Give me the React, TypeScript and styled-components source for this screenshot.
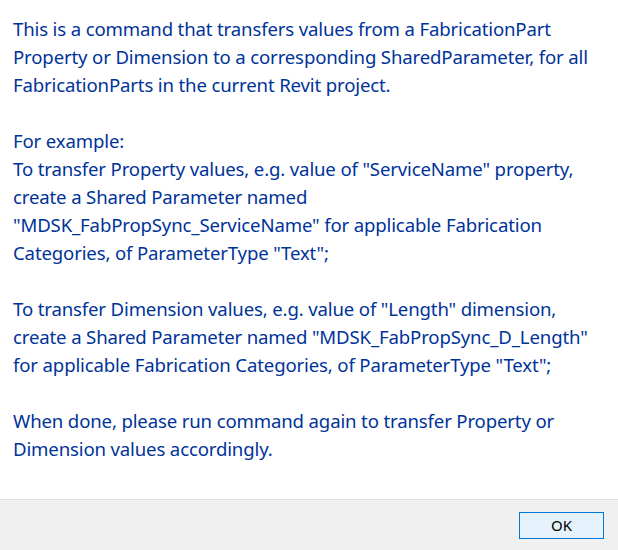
import React from "react";
import styled, { createGlobalStyle } from "styled-components";

const GlobalStyle = createGlobalStyle`
  html, body {
    margin: 0;
    padding: 0;
    background: #fff;
  }
  #root {
    height: 550px;
  }
`;

const Dialog = styled.div`
  display: flex;
  flex-direction: column;
  width: 618px;
  height: 550px;
  background: #fff;
  font-family: "Noto Sans", "Open Sans", sans-serif;
`;

const Content = styled.div`
  flex: 1;
  padding: 15px 13px 0 13px;
  display: flex;
  flex-direction: column;
  gap: 28px;
`;

const Paragraph = styled.p`
  margin: 0;
  color: #003399;
  font-size: 18.6px;
  letter-spacing: -0.15px;
  line-height: 28px;
  white-space: nowrap;
`;

const Footer = styled.div`
  height: 50px;
  border-top: 1px solid #dfdfdf;
  background: #f0f0f0;
  display: flex;
  align-items: center;
  justify-content: flex-end;
  padding-right: 14px;
`;

const Button = styled.button`
  width: 85px;
  height: 27px;
  box-sizing: border-box;
  border: 1px solid #0078d7;
  background: #e5f1fb;
  color: #000;
  font-family: "Noto Sans", "Open Sans", sans-serif;
  font-size: 15px;
  padding: 0;
  cursor: pointer;
`;

const paragraphs: string[][] = [
  [
    "This is a command that transfers values from a FabricationPart",
    "Property or Dimension to a corresponding SharedParameter, for all",
    "FabricationParts in the current Revit project.",
  ],
  [
    "For example:",
    'To transfer Property values, e.g. value of "ServiceName" property,',
    "create a Shared Parameter named",
    '"MDSK_FabPropSync_ServiceName" for applicable Fabrication',
    'Categories, of ParameterType "Text";',
  ],
  [
    'To transfer Dimension values, e.g. value of "Length" dimension,',
    'create a Shared Parameter named "MDSK_FabPropSync_D_Length"',
    'for applicable Fabrication Categories, of ParameterType "Text";',
  ],
  [
    "When done, please run command again to transfer Property or",
    "Dimension values accordingly.",
  ],
];

export default function App() {
  return (
    <>
      <GlobalStyle />
      <Dialog>
        <Content>
          {paragraphs.map((lines, i) => (
            <Paragraph key={i}>
              {lines.map((line, j) => (
                <React.Fragment key={j}>
                  {line}
                  {j < lines.length - 1 && <br />}
                </React.Fragment>
              ))}
            </Paragraph>
          ))}
        </Content>
        <Footer>
          <Button>OK</Button>
        </Footer>
      </Dialog>
    </>
  );
}
